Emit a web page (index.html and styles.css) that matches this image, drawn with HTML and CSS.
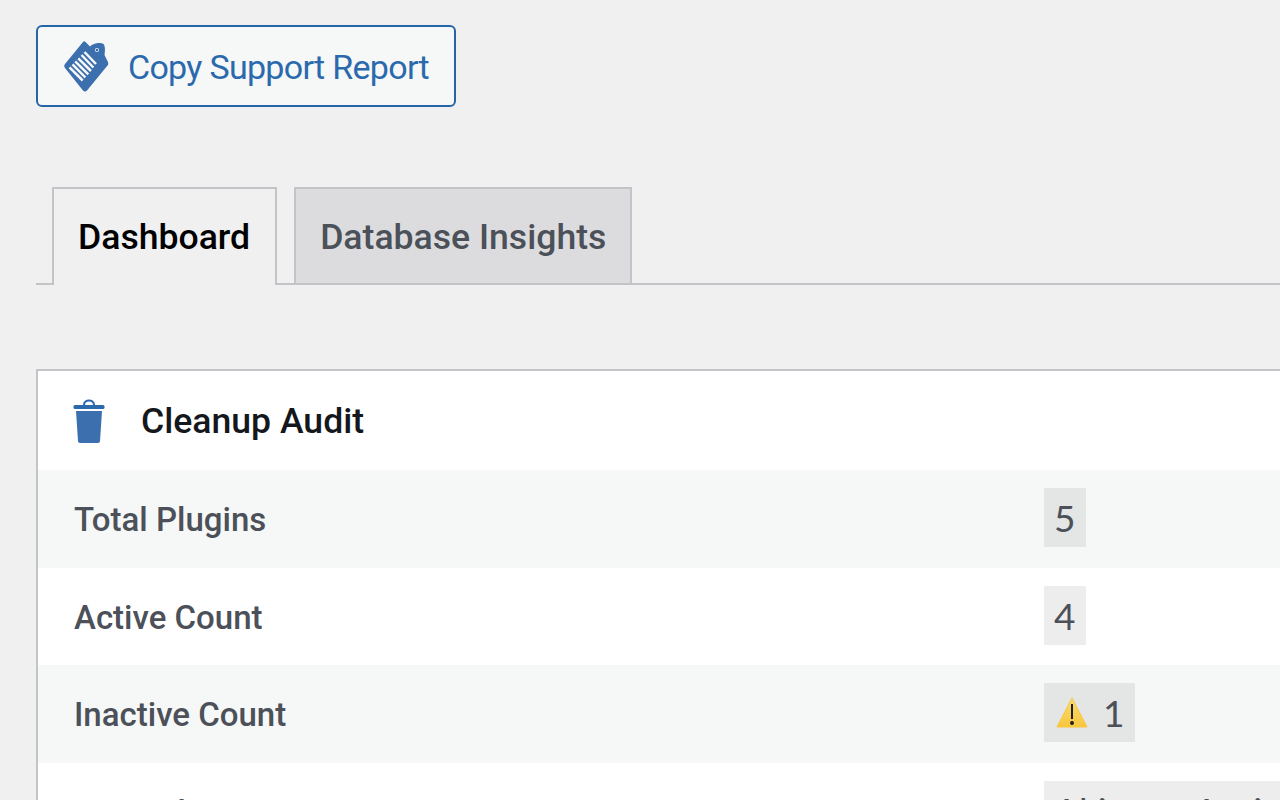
FILE: index.html
```html
<!DOCTYPE html>
<html>
<head>
    <title>Cleanup Audit</title>
    <link rel="stylesheet" href="styles.css">
</head>
<body>
    <button class="report-btn">
        <svg class="report-icon" width="45" height="53" viewBox="0 0 45 53">
            <path d="M19 2 Q20 0.500 21.500 2 L26 6.500 C29 3 36 2 39.500 4 C41.500 6 41 12 40.500 15 L43.500 21 Q45 24 43.500 25.500 L23 50.500 Q21 52.500 19 50.500 L1 28 Q-0.500 26 1 24 Z" fill="#3b6fae"/>
            <circle cx="33" cy="10" r="2" fill="#f6f7f7"/>
            <circle cx="33" cy="10" r="1.200" fill="#2566a8"/>
            <path d="M20.500 12 L32 24 M17.500 15 L29.400 27.500 M14.300 18.300 L27 31 M11.200 21.300 L24.300 34.300 M8.500 24.300 L21.400 37.500 M5.500 27.300 L18.700 40.500" stroke="#f6f7f7" stroke-width="2.500" fill="none"/>
        </svg>
        <span>Copy Support Report</span>
    </button>

    <div class="tabs">
        <a class="tab tab-active">Dashboard</a>
        <a class="tab">Database Insights</a>
    </div>

    <div class="panel">
        <div class="panel-head">
            <svg class="trash-icon" width="32" height="44" viewBox="0 0 32 44">
                <path d="M11 6 C11 0 21 0 21 6" stroke="#2c68ac" stroke-width="2" fill="none"/>
                <rect x="0.500" y="6" width="31" height="4" rx="1.500" fill="#2c68ac"/>
                <path d="M3 12 H29 L27 42 Q27 44 25 44 H7 Q5 44 5 42 Z" fill="#3b6fae"/>
            </svg>
            <h2>Cleanup Audit</h2>
        </div>
        <div class="row row-alt">
            <div class="row-label">Total Plugins</div>
            <div class="row-value"><span class="pill">5</span></div>
        </div>
        <div class="row">
            <div class="row-label">Active Count</div>
            <div class="row-value"><span class="pill">4</span></div>
        </div>
        <div class="row row-alt">
            <div class="row-label">Inactive Count</div>
            <div class="row-value">
                <span class="pill">
                    <svg class="warn-icon" width="32" height="31" viewBox="0 0 32 31">
                        <defs>
                            <linearGradient id="warn-fill" x1="0" y1="0" x2="0" y2="1">
                                <stop offset="0" stop-color="#fbdc74"/>
                                <stop offset="1" stop-color="#f8c63d"/>
                            </linearGradient>
                        </defs>
                        <path d="M16 1 L31 30 H1 Z" fill="url(#warn-fill)" stroke="#f8c63d" stroke-linejoin="round"/>
                        <rect x="15" y="7" width="2" height="15" fill="#1d2327"/>
                        <circle cx="16" cy="26" r="2" fill="#1d2327"/>
                    </svg>
                    1
                </span>
            </div>
        </div>
        <div class="row">
            <div class="row-label">Unused List</div>
            <div class="row-value"><span class="pill">Akismet Anti-Spam</span></div>
        </div>
    </div>
</body>
</html>
```

FILE: styles.css
```css
html {
    overflow: hidden;
}
body {
    margin: 0;
    padding: 25px 0 0 36px;
    height: 775px;
    overflow: hidden;
    background: #f0f0f1;
    font-family: Roboto, "Noto Sans", sans-serif;
    color: #4b5059;
}
.report-btn {
    display: flex;
    align-items: center;
    gap: 19px;
    box-sizing: border-box;
    width: 420px;
    height: 82px;
    padding: 0 0 0 26px;
    background: #f6f7f7;
    border: 2px solid #2566a8;
    border-radius: 6px;
    color: #2a6aac;
    font-family: inherit;
    font-size: 34px;
    letter-spacing: -0.7px;
}
.report-btn span {
    padding-top: 2px;
}
.tabs {
    display: flex;
    gap: 17px;
    margin-top: 80px;
    padding-left: 16px;
    height: 96px;
    border-bottom: 2px solid #c3c4c7;
}
.tab {
    box-sizing: border-box;
    height: 96px;
    padding: 2px 24px 0;
    display: flex;
    align-items: center;
    background: #dcdcde;
    border: 2px solid #c3c4c7;
    border-bottom: none;
    font-size: 35.600px;
    font-weight: 500;
}
.tab-active {
    height: 98px;
    padding-right: 25px;
    padding-bottom: 2px;
    background: #f0f0f1;
    color: #000;
}
.panel {
    margin-top: 84px;
    width: 1400px;
    background: #fff;
    border: 2px solid #c3c4c7;
}
.panel-head {
    display: flex;
    align-items: center;
    gap: 36px;
    height: 99px;
    padding-left: 35px;
}
.panel-head h2 {
    margin: 0;
    font-size: 35.600px;
    font-weight: 500;
    color: #14181c;
}
.row {
    display: flex;
    align-items: center;
    height: 97.500px;
}
.row-alt {
    background: #f6f7f7;
}
.row-label {
    width: 1006px;
    padding-left: 36px;
    padding-top: 2px;
    box-sizing: border-box;
    font-size: 33px;
    font-weight: 500;
}
.row-value {
    margin-bottom: 2px;
}
.pill {
    display: inline-flex;
    align-items: center;
    gap: 15px;
    height: 59px;
    padding: 0 11px 0 10px;
    background: rgba(0, 0, 0, 0.07);
    font-size: 37px;
    font-family: Lato, sans-serif;
}
.warn-icon {
    margin-left: 2px;
}
```
